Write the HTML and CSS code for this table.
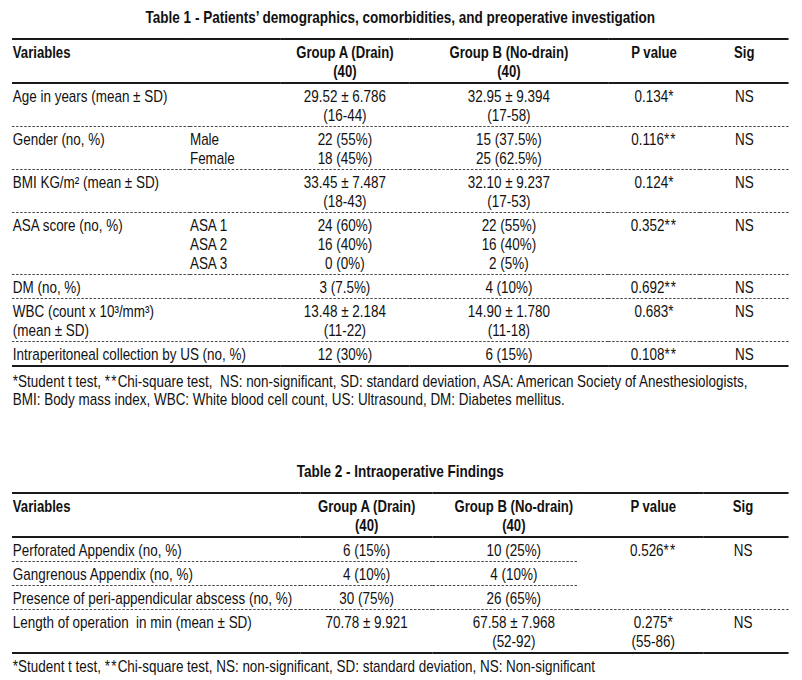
FILE: index.html
```html
<!DOCTYPE html>
<html lang="en">
<head>
<meta charset="utf-8">
<title>Tables</title>
<link rel="stylesheet" href="styles.css">
</head>
<body>
<div class="sheet">
<div class="page">
  <section class="block block-1">
    <h2 class="caption">Table 1 - Patients’ demographics, comorbidities, and preoperative investigation</h2>
    <table class="data">
      <colgroup>
        <col class="c1-var"><col class="c1-sub"><col class="c1-a"><col class="c1-b"><col class="c1-p"><col class="c1-sig">
      </colgroup>
      <thead>
        <tr>
          <th colspan="2" class="left">Variables</th>
          <th>Group A (Drain)<br>(40)</th>
          <th>Group B (No-drain)<br>(40)</th>
          <th>P value</th>
          <th>Sig</th>
        </tr>
      </thead>
      <tbody>
        <tr>
          <td class="left" colspan="2">Age in years (mean ± SD)</td>
          <td>29.52 ± 6.786<br>(16-44)</td><td>32.95 ± 9.394<br>(17-58)</td><td>0.134*</td><td>NS</td>
        </tr>
        <tr>
          <td class="left">Gender (no, %)</td><td class="sub">Male<br>Female</td>
          <td>22 (55%)<br>18 (45%)</td><td>15 (37.5%)<br>25 (62.5%)</td><td>0.116<span class="ast">**</span></td><td>NS</td>
        </tr>
        <tr>
          <td class="left" colspan="2">BMI KG/m² (mean ± SD)</td>
          <td>33.45 ± 7.487<br>(18-43)</td><td>32.10 ± 9.237<br>(17-53)</td><td>0.124*</td><td>NS</td>
        </tr>
        <tr>
          <td class="left">ASA score (no, %)</td><td class="sub">ASA 1<br>ASA 2<br>ASA 3</td>
          <td>24 (60%)<br>16 (40%)<br>0 (0%)</td><td>22 (55%)<br>16 (40%)<br>2 (5%)</td><td>0.352<span class="ast">**</span></td><td>NS</td>
        </tr>
        <tr>
          <td class="left" colspan="2">DM (no, %)</td>
          <td>3 (7.5%)</td><td>4 (10%)</td><td>0.692<span class="ast">**</span></td><td>NS</td>
        </tr>
        <tr>
          <td class="left" colspan="2">WBC (count x 10³/mm³)<br>(mean ± SD)</td>
          <td>13.48 ± 2.184<br>(11-22)</td><td>14.90 ± 1.780<br>(11-18)</td><td>0.683*</td><td>NS</td>
        </tr>
        <tr class="last">
          <td class="left" colspan="2">Intraperitoneal collection by US (no, %)</td>
          <td>12 (30%)</td><td>6 (15%)</td><td>0.108<span class="ast">**</span></td><td>NS</td>
        </tr>
      </tbody>
    </table>
    <p class="note">*Student t test, <span class="ast">**</span>Chi-square test,&nbsp; NS: non-significant, SD: standard deviation, ASA: American Society of Anesthesiologists,<br>BMI: Body mass index, WBC: White blood cell count, US: Ultrasound, DM: Diabetes mellitus.</p>
  </section>

  <section class="block block-2">
    <h2 class="caption">Table 2 - Intraoperative Findings</h2>
    <table class="data t2">
      <colgroup>
        <col class="c2-var"><col class="c2-a"><col class="c2-b"><col class="c2-p"><col class="c2-sig">
      </colgroup>
      <thead>
        <tr>
          <th class="left">Variables</th>
          <th>Group A (Drain)<br>(40)</th>
          <th class="b">Group B (No-drain)<br>(40)</th>
          <th class="p">P value</th>
          <th class="sig">Sig</th>
        </tr>
      </thead>
      <tbody>
        <tr>
          <td class="left">Perforated Appendix (no, %)</td>
          <td>6 (15%)</td><td class="b">10 (25%)</td>
          <td class="p" rowspan="3">0.526<span class="ast">**</span></td><td class="sig" rowspan="3">NS</td>
        </tr>
        <tr>
          <td class="left">Gangrenous Appendix (no, %)</td>
          <td>4 (10%)</td><td class="b">4 (10%)</td>
        </tr>
        <tr>
          <td class="left">Presence of peri-appendicular abscess (no, %)</td>
          <td>30 (75%)</td><td class="b">26 (65%)</td>
        </tr>
        <tr class="last">
          <td class="left">Length of operation&nbsp; in min (mean ± SD)</td>
          <td>70.78 ± 9.921</td><td class="b">67.58 ± 7.968<br>(52-92)</td>
          <td class="p">0.275*<br>(55-86)</td><td class="sig">NS</td>
        </tr>
      </tbody>
    </table>
    <p class="note note-tight">*Student t test, <span class="ast">**</span>Chi-square test, NS: non-significant, SD: standard deviation, NS: Non-significant</p>
  </section>
</div>
</div>
</body>
</html>
```

FILE: styles.css
```css
html, body {
  margin: 0;
  padding: 0;
  background: #ffffff;
}

body {
  font-family: "Liberation Sans", Arial, sans-serif;
  font-size: 16.4px;
  line-height: 19px;
  color: #111111;
  overflow: hidden;
}

/* outer frame: page offset */
.sheet {
  padding: 8px 0 0 12px;
  width: 777px;
}

/* Arial-Narrow look: the whole sheet is compressed horizontally */
.page {
  width: 947px;
  transform: scaleX(0.82);
  transform-origin: 0 0;
}

.caption {
  margin: 0 0 11px;
  font-size: 16.5px;
  line-height: 19px;
  font-weight: bold;
  text-align: center;
}

.block-2 {
  margin-top: 54px;
}

.data {
  width: 947px;
  border-collapse: collapse;
  table-layout: fixed;
  border-top: 2px solid #1a1a1a;
}

.data th,
.data td {
  padding: 3px 0 1px;
  text-align: center;
  vertical-align: top;
  font-weight: normal;
}

.data th {
  font-size: 16px;
  font-weight: bold;
  border-bottom: 2px solid #1a1a1a;
}

.data td {
  border-bottom: 1px dashed #333333;
}

.data tr.last td {
  border-bottom: 2px solid #1a1a1a;
}

.data .left {
  text-align: left;
  padding-left: 1px;
}

.data .sub {
  text-align: left;
}

.ast {
  letter-spacing: 1.5px;
}

/* Table 1 columns */
.c1-var { width: 217px; }
.c1-sub { width: 110px; }
.c1-a { width: 158px; }
.c1-b { width: 242px; }
.c1-p { width: 112px; }
.c1-sig { width: 108px; }

/* Table 2 columns */
.c2-var { width: 352px; }
.c2-a { width: 161px; }
.c2-b { width: 176px; }
.c2-p { width: 154px; }
.c2-sig { width: 104px; }

.t2 .b { padding-left: 22px; }
.t2 .p { padding-left: 32px; }
.t2 .sig { padding-right: 7px; }

.note {
  margin: 5px 0 0;
  line-height: 18px;
  padding-left: 1px;
}

.note-tight {
  margin-top: 3px;
}
```
